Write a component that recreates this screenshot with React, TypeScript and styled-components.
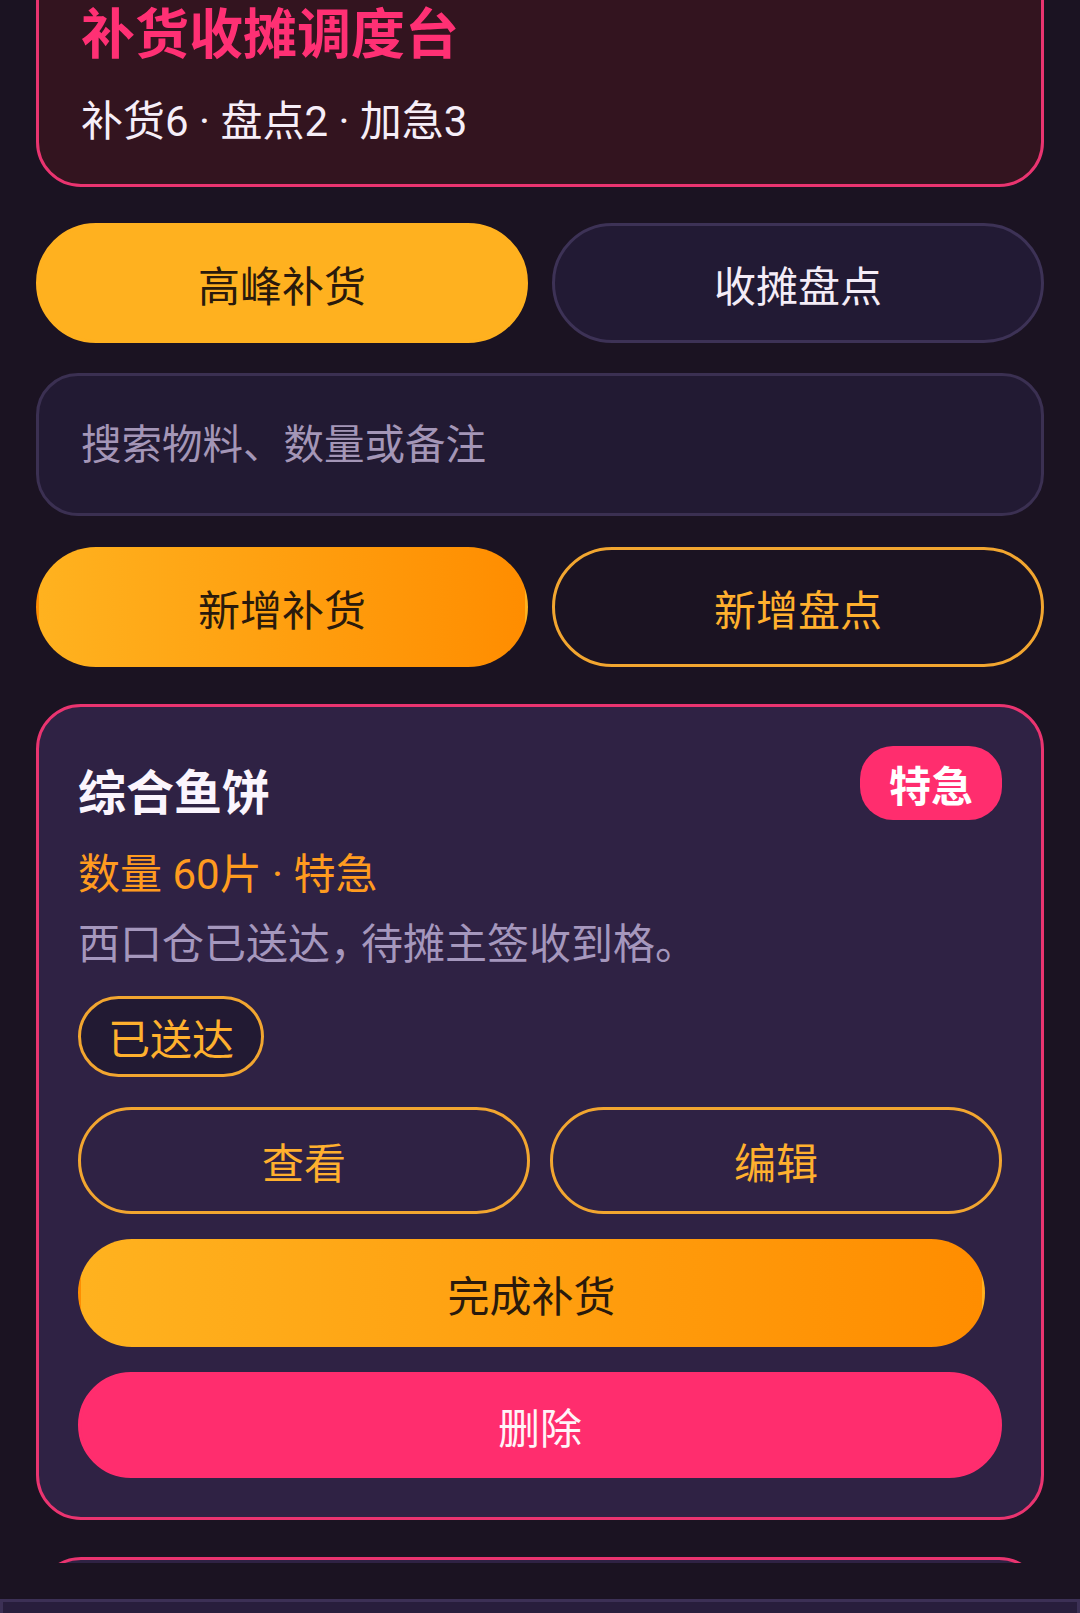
import React, { useLayoutEffect, useRef } from "react";
import styled, { createGlobalStyle, css } from "styled-components";

const FONT = `Roboto, "Noto Sans CJK SC", "Noto Sans", sans-serif`;

const GlobalStyle = createGlobalStyle`
  html, body {
    margin: 0;
    padding: 0;
    background: #1b1322;
    overflow: hidden;
  }
  * {
    box-sizing: border-box;
  }
  body {
    font-family: ${FONT};
    color: #f4ecf7;
  }
`;

const Screen = styled.div`
  display: flex;
  flex-direction: column;
  width: 1080px;
  height: 1613px;
  overflow: hidden;
  background: #1b1322;
`;

const Scroller = styled.div`
  flex: 0 0 1563px;
  overflow-y: auto;
  scrollbar-width: none;
  &::-webkit-scrollbar {
    display: none;
  }
`;

const Content = styled.div`
  display: flex;
  flex-direction: column;
  padding: 36px 36px 60px;
`;

const Hero = styled.section`
  background: #33141f;
  border: 3px solid #ea3470;
  border-radius: 45px;
  padding: 42px 42px 31px;
`;

const HeroTitle = styled.h1`
  margin: 0;
  font-size: 54px;
  line-height: 70px;
  font-weight: 700;
  color: #ff3074;
`;

const HeroStats = styled.div`
  margin-top: 19px;
  font-size: 42px;
  line-height: 63px;
  color: #f6eef8;
`;

const ButtonRow = styled.div<{ $top: number }>`
  display: grid;
  grid-template-columns: 1fr 1fr;
  gap: 24px;
  margin-top: ${(p) => p.$top}px;
`;

type Tone = "solid" | "gradient" | "muted" | "outline" | "danger";

const toneStyles: Record<Tone, ReturnType<typeof css>> = {
  solid: css`
    background: #ffb11f;
    border-color: #ffb11f;
    color: #2a1a0c;
  `,
  gradient: css`
    background: linear-gradient(90deg, #ffb21f 0%, #ff8d00 100%);
    border-color: transparent;
    color: #2a1a0c;
  `,
  muted: css`
    background: #221a34;
    border-color: #3d3256;
    color: #f4ecf7;
  `,
  outline: css`
    background: transparent;
    border-color: #f2a630;
    color: #ffb02e;
  `,
  danger: css`
    background: #ff2d6e;
    border-color: #ff2d6e;
    color: #fff4f8;
  `,
};

const PillButton = styled.button<{ $tone: Tone; $height: number }>`
  display: flex;
  align-items: center;
  justify-content: center;
  height: ${(p) => p.$height}px;
  border: 3px solid;
  border-radius: 999px;
  font-family: ${FONT};
  font-size: 42px;
  font-weight: 400;
  padding: 0;
  cursor: pointer;
  ${(p) => toneStyles[p.$tone]}
`;

const Search = styled.input`
  margin-top: 30px;
  height: 143px;
  width: 100%;
  background: #221a33;
  border: 3px solid #3b3052;
  border-radius: 42px;
  padding: 0 42px;
  font-family: ${FONT};
  font-size: 40.5px;
  color: #f4ecf7;
  outline: none;
  &::placeholder {
    color: #a496b7;
  }
`;

const Card = styled.article`
  margin-top: 37px;
  background: #2f2244;
  border: 3px solid #ea3470;
  border-radius: 45px;
  padding: 39px;
  display: flex;
  flex-direction: column;
`;

const CardHead = styled.div`
  display: flex;
  justify-content: space-between;
  align-items: flex-start;
`;

const ItemName = styled.h2`
  margin: 17px 0 0;
  font-size: 48px;
  line-height: 62px;
  font-weight: 700;
  color: #fbf5fd;
`;

const UrgentTag = styled.span`
  display: inline-flex;
  align-items: center;
  justify-content: center;
  height: 74px;
  padding: 0 29px;
  border-radius: 33px;
  background: #ff2d6e;
  color: #ffffff;
  font-size: 42px;
  font-weight: 700;
`;

const Meta = styled.div`
  margin-top: 18px;
  font-size: 42px;
  line-height: 63px;
  color: #ff9b1f;
`;

const Note = styled.div`
  margin-top: 7px;
  font-size: 42px;
  line-height: 63px;
  color: #a597bd;
`;

// full-width punctuation is set a little tighter in the reference
const Punct = styled.span`
  letter-spacing: -11px;
`;

const StatusBadge = styled.span`
  align-self: flex-start;
  display: inline-flex;
  align-items: center;
  height: 81px;
  margin-top: 20px;
  padding: 0 27px;
  border: 3px solid #f2a630;
  border-radius: 999px;
  background: #221a33;
  color: #ffb02e;
  font-size: 42px;
`;

const Actions = styled.div`
  display: flex;
  flex-direction: column;
  gap: 25px;
  margin-top: 30px;
`;

const ActionPair = styled.div`
  display: grid;
  grid-template-columns: 1fr 1fr;
  gap: 20px;
`;

const CompleteButton = styled(PillButton)`
  margin-right: 17px;
`;

const Footer = styled.footer`
  flex: 0 0 160px;
  margin-top: 36px;
  background: #281e3c;
  border: 3px solid #3c3055;
`;

interface Item {
  name: string;
  qty: string;
  note: [string, string];
  status: string;
  urgent: boolean;
  done: string;
}

const items: Item[] = [
  {
    name: "综合鱼饼",
    qty: "数量 60片 · 特急",
    note: ["西口仓已送达", "待摊主签收到格。"],
    status: "已送达",
    urgent: true,
    done: "完成补货",
  },
  {
    name: "竹签",
    qty: "数量 2包 · 普通",
    note: ["东侧货架", "待清点。"],
    status: "待处理",
    urgent: false,
    done: "完成补货",
  },
];

const ItemCard: React.FC<{ item: Item }> = ({ item }) => (
  <Card>
    <CardHead>
      <ItemName>{item.name}</ItemName>
      {item.urgent && <UrgentTag>特急</UrgentTag>}
    </CardHead>
    <Meta>{item.qty}</Meta>
    <Note>
      {item.note[0]}
      <Punct>，</Punct>
      {item.note[1]}
    </Note>
    <StatusBadge>{item.status}</StatusBadge>
    <Actions>
      <ActionPair>
        <PillButton $tone="outline" $height={107}>
          查看
        </PillButton>
        <PillButton $tone="outline" $height={107}>
          编辑
        </PillButton>
      </ActionPair>
      <CompleteButton $tone="gradient" $height={108}>
        {item.done}
      </CompleteButton>
      <PillButton $tone="danger" $height={106}>
        删除
      </PillButton>
    </Actions>
  </Card>
);

export default function App() {
  const scrollRef = useRef<HTMLDivElement>(null);

  // the reference is captured part way down the list
  useLayoutEffect(() => {
    if (scrollRef.current) scrollRef.current.scrollTop = 80;
  }, []);

  return (
    <>
      <GlobalStyle />
      <Screen>
        <Scroller ref={scrollRef}>
          <Content>
            <Hero>
              <HeroTitle>补货收摊调度台</HeroTitle>
              <HeroStats>补货6 · 盘点2 · 加急3</HeroStats>
            </Hero>

            <ButtonRow $top={36}>
              <PillButton $tone="solid" $height={120}>
                高峰补货
              </PillButton>
              <PillButton $tone="muted" $height={120}>
                收摊盘点
              </PillButton>
            </ButtonRow>

            <Search placeholder="搜索物料、数量或备注" />

            <ButtonRow $top={31}>
              <PillButton $tone="gradient" $height={120}>
                新增补货
              </PillButton>
              <PillButton $tone="outline" $height={120}>
                新增盘点
              </PillButton>
            </ButtonRow>

            {items.map((item) => (
              <ItemCard key={item.name} item={item} />
            ))}
          </Content>
        </Scroller>
        <Footer />
      </Screen>
    </>
  );
}
